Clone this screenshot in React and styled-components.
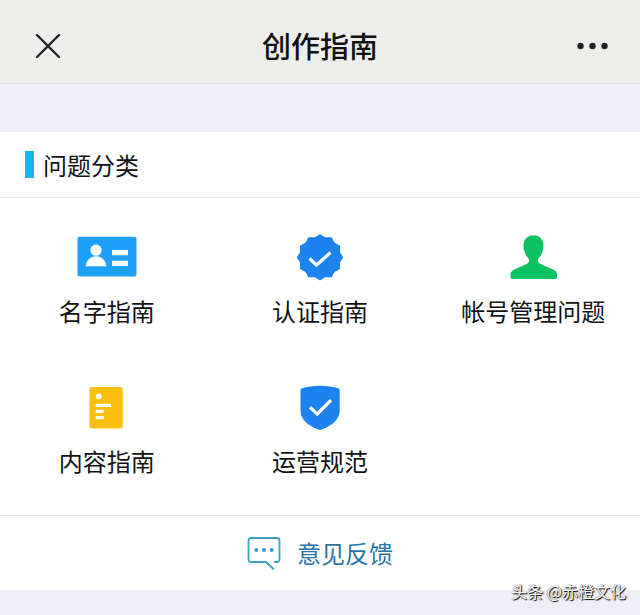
import styled, { createGlobalStyle } from "styled-components";

const GlobalStyle = createGlobalStyle`
* {
    box-sizing: border-box;
}
body {
    margin: 0;
    background: #f0eef5;
    font-family: "Noto Sans CJK SC", "Noto Sans", sans-serif;
    color: #111;
}
`;

const Page = styled.div`
position: relative;
min-height: 100vh;
`;

const Header = styled.header`
display: grid;
grid-template-columns: 1fr auto 1fr;
align-items: center;
height: 84px;
padding: 8px 32px 0;
margin-bottom: 48px;
background: #ededec;
border-bottom: 1px solid #e3e2e5;
`;

const PageTitle = styled.h1`
margin: 0;
padding-bottom: 2px;
font-size: 29px;
line-height: 40px;
font-weight: 500;
`;

const IconBtn = styled.button`
display: flex;
justify-self: ${props => props.$end ? "end" : "start"};
padding: 0;
border: none;
background: none;
color: #222;
cursor: pointer;
`;

const Card = styled.main`
background: #fff;
`;

const SectionTitle = styled.h2`
display: flex;
align-items: center;
gap: 9px;
height: 66px;
margin: 0;
padding: 0 25px;
font-size: 24px;
line-height: 36px;
font-weight: 400;
border-bottom: 1px solid #e8e8ea;

&::before {
    content: "";
    width: 9px;
    height: 27px;
    background: #1ab2ec;
}
`;

const GuideList = styled.ul`
display: grid;
grid-template-columns: repeat(3, 1fr);
row-gap: 54px;
margin: 0;
padding: 35px 0 36px;
list-style: none;
`;

const GuideLink = styled.a`
display: flex;
flex-direction: column;
align-items: center;
gap: 12px;
font-size: 24px;
line-height: 36px;
white-space: nowrap;
color: inherit;
text-decoration: none;
`;

const Feedback = styled.a`
display: flex;
justify-content: center;
align-items: center;
gap: 16px;
height: 75px;
border-top: 1px solid #e8e8ea;
font-size: 24px;
line-height: 36px;
color: #2874a6;
text-decoration: none;
`;

const Watermark = styled.span`
position: absolute;
right: 14px;
bottom: 12px;
font-size: 16px;
line-height: 24px;
color: #fff;
text-shadow: 1px 1px 1px #000, 0 0 1px #333;
`;

const CloseIcon = () => (
    <svg width="32" height="32" viewBox="0 0 32 32" fill="none" stroke="currentColor" strokeWidth="2.4" strokeLinecap="round" aria-hidden="true">
        <path d="M5 5l22 22M27 5L5 27" />
    </svg>
);

const MoreIcon = () => (
    <svg width="32" height="32" viewBox="0 0 32 32" fill="currentColor" aria-hidden="true">
        <circle cx="4.5" cy="16" r="3.2" />
        <circle cx="16.5" cy="16" r="3.2" />
        <circle cx="28.5" cy="16" r="3.2" />
    </svg>
);

const GuideSvg = styled.svg.attrs({ viewBox: "0 0 60 48", "aria-hidden": true })`
width: 60px;
height: 48px;
`;

const NameIcon = () => (
    <GuideSvg>
        <rect x="0.5" y="3.8" width="59" height="39.7" rx="2" fill="#1ea0f8" />
        <circle cx="19" cy="17.2" r="5.6" fill="#fff" />
        <path d="M8.5 33.3C9.5 27 13.5 23.3 19 23.3S28.500 27 29.500 33.300z" fill="#fff" />
        <path d="M35 17h16v5.3H35zM35 27.700h16V33H35z" fill="#fff" />
    </GuideSvg>
);

// twelve-pointed seal, tips and notches alternate every 15 degrees
const sealPoints = Array.from({ length: 24 }, (_, i) => {
    const r = i % 2 === 0 ? 22 : 19.6;
    const a = (i * Math.PI) / 12;
    return `${(30 + r * Math.sin(a)).toFixed(2)},${(24.3 - r * Math.cos(a)).toFixed(2)}`;
}).join(" ");

const VerifyIcon = () => (
    <GuideSvg>
        <polygon points={sealPoints} fill="#1c83ee" stroke="#1c83ee" strokeWidth="2" strokeLinejoin="round" />
        <path d="M19.5 25.5l7 6.5 14-12.500" fill="none" stroke="#fff" strokeWidth="3.2" />
    </GuideSvg>
);

const AccountIcon = () => (
    <GuideSvg>
        <path
            d="M30.5 2.3c-6.200 0-10 4.500-10 10.500 0 5.200 2.200 9.600 4.700 12.300 1.400 1.600 1.300 4-.4 5.100C21 32.500 14 34.800 10 37.200c-1.800 1.100-2.500 2.600-2.500 4.300V44c0 1.300.9 2 2 2h42.500c1.200 0 2-.7 2-2v-2.500c0-1.700-.8-3.200-2.500-4.300-4-2.400-11.300-4.700-15.200-7-1.700-1.100-1.800-3.500-.4-5.100 2.500-2.700 4.600-7.100 4.600-12.300 0-6-3.900-10.500-10-10.500z"
            fill="#0cc160"
        />
    </GuideSvg>
);

const ContentIcon = () => (
    <GuideSvg>
        <rect x="12.5" y="4" width="33.3" height="41.6" rx="2" fill="#fdc012" />
        <circle cx="21.7" cy="13.3" r="2.9" fill="#fff" />
        <path d="M18.7 20.7H34v3.2H18.700zM18.700 26.800h8V30h-8zM18.700 33.100h8v3.200h-8z" fill="#fff" />
    </GuideSvg>
);

const RuleIcon = () => (
    <GuideSvg>
        <path
            d="M30 2.8c7 0 13 1 18 2.500 1.200.4 1.700 1 1.700 2.200V27c0 8.500-5.500 14.500-18 19.600-1.200.5-2.200.5-3.400 0C15.800 41.500 10.500 35.500 10.500 27V7.500c0-1.200.5-1.800 1.700-2.200C17 3.800 23 2.800 30 2.800z"
            fill="#1c83ee"
        />
        <path d="M20 24.3l7.300 6.700L41 17.200" fill="none" stroke="#fff" strokeWidth="3.2" />
    </GuideSvg>
);

const FeedbackIcon = () => (
    <svg width="34" height="34" viewBox="0 0 34 34" fill="none" stroke="#3ba3c4" strokeWidth="1.8" strokeLinecap="round" aria-hidden="true">
        <path d="M28 26h2a2.5 2.5 0 0 0 2.5-2.5v-19A2.500 2.500 0 0 0 30 2H4a2.500 2.500 0 0 0-2.500 2.500v19A2.500 2.500 0 0 0 4 26h15l7.500 7" />
        <g fill="#3098c4" stroke="none">
            <circle cx="9.3" cy="14" r="1.9" />
            <circle cx="17" cy="14" r="1.9" />
            <circle cx="24.7" cy="14" r="1.9" />
        </g>
    </svg>
);

const guides = [
    { name: "名字指南", Icon: NameIcon },
    { name: "认证指南", Icon: VerifyIcon },
    { name: "帐号管理问题", Icon: AccountIcon },
    { name: "内容指南", Icon: ContentIcon },
    { name: "运营规范", Icon: RuleIcon },
];

export default function App() {
    return (
        <Page lang="zh-CN">
            <GlobalStyle />
            <Header>
                <IconBtn type="button" aria-label="关闭">
                    <CloseIcon />
                </IconBtn>
                <PageTitle>创作指南</PageTitle>
                <IconBtn type="button" aria-label="更多" $end>
                    <MoreIcon />
                </IconBtn>
            </Header>
            <Card>
                <SectionTitle>问题分类</SectionTitle>
                <GuideList>
                    {guides.map(({ name, Icon }) => (
                        <li key={name}>
                            <GuideLink href="#">
                                <Icon />
                                {name}
                            </GuideLink>
                        </li>
                    ))}
                </GuideList>
                <Feedback href="#">
                    <FeedbackIcon />
                    意见反馈
                </Feedback>
            </Card>
            <Watermark>头条 @赤橙文化</Watermark>
        </Page>
    );
}
